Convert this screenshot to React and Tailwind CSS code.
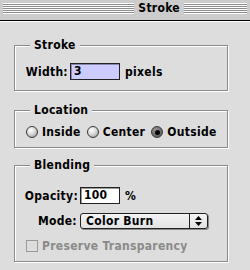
import React from 'react';

const font = { fontFamily: '"DejaVu Sans Condensed", "DejaVu Sans", "Liberation Sans", sans-serif' };

function Group({ title, className = '', children }) {
  return (
    <fieldset
      className={`ml-[14px] w-[214px] border border-[#8a8a8a] shadow-[inset_1px_1px_0_#fff,1px_1px_0_#fff] ${className}`}
    >
      <legend className="ml-[15px] px-[4px] h-[13px] leading-[13px] bg-[#dddddd] text-[12px] font-bold text-black">
        {title}
      </legend>
      {children}
    </fieldset>
  );
}

function Radio({ label, checked }) {
  return (
    <div className="flex items-center gap-[4px]">
      <span
        className={`w-[12px] h-[12px] rounded-full border border-[#3a3a3a] flex items-center justify-center ${
          checked
            ? 'bg-[radial-gradient(circle_at_40%_35%,#9a9a9a,#4a4a4a)]'
            : 'bg-[radial-gradient(circle_at_38%_32%,#ffffff_0%,#d8d8d8_45%,#8c8c8c_100%)]'
        }`}
      >
        {checked && <span className="w-[5px] h-[5px] rounded-full bg-black" />}
      </span>
      <span className="text-[12px] font-bold leading-[14px]">{label}</span>
    </div>
  );
}

function Stripes({ className = '' }) {
  return (
    <div
      className={`h-[11px] bg-[repeating-linear-gradient(to_bottom,#ffffff_0px,#ffffff_1px,#8c8c8c_1px,#8c8c8c_2px)] ${className}`}
    />
  );
}

export default function App() {
  return (
    <div className="w-[250px] h-[270px] bg-[#dddddd] text-black tracking-[0.3px] overflow-hidden" style={font}>
      {/* floating window title bar */}
      <div className="h-[21px] bg-[#cccccc] border-b border-black flex items-center px-[3px] pb-[3px]">
        <Stripes className="flex-1" />
        <span className="px-[4px] text-[12px] font-bold leading-[13px]">Stroke</span>
        <Stripes className="w-[63px]" />
      </div>
      <div className="border-t border-white">
        <Group title="Stroke" className="mt-[17px] pt-[11px] pb-[10px]">
          <div className="flex items-center h-[17px]">
            <span className="w-[53px] text-right text-[12px] font-bold">Width:</span>
            <div className="ml-[2px] w-[50px] h-[17px] bg-[#ccccff] border border-[#222] shadow-[inset_1px_1px_0_#8888aa] px-[3px] text-[12px] font-bold leading-[15px]">
              3
            </div>
            <span className="ml-[5px] text-[12px] font-bold">pixels</span>
          </div>
        </Group>

        <Group title="Location" className="mt-[13px] pt-[8px] pb-[8px]">
          <div className="flex items-center pl-[11px] gap-[6px]">
            <Radio label="Inside" />
            <Radio label="Center" />
            <Radio label="Outside" checked />
          </div>
        </Group>

        <Group title="Blending" className="mt-[11px] pt-[15px] pb-[8px]">
          <div className="flex items-center h-[17px]">
            <span className="w-[63px] text-right text-[12px] font-bold">Opacity:</span>
            <div className="ml-[2px] w-[40px] h-[17px] bg-white border border-[#222] shadow-[inset_1px_1px_0_#999] px-[3px] text-[12px] font-bold leading-[15px]">
              100
            </div>
            <span className="ml-[5px] text-[12px] font-bold">%</span>
          </div>
          <div className="flex items-center mt-[8px] h-[17px]">
            <span className="w-[62px] text-right text-[12px] font-bold">Mode:</span>
            <div className="ml-[3px] w-[128px] h-[16px] flex rounded-[3px] border border-[#222] bg-[linear-gradient(to_bottom,#f4f4f4,#e2e2e2)] shadow-[1px_1px_0_#888]">
              <span className="flex-1 pl-[5px] text-[12px] font-bold leading-[14px]">Color Burn</span>
              <span className="w-[18px] border-l border-[#222] flex items-center justify-center">
                <svg width="7" height="10" viewBox="0 0 7 10">
                  <path d="M3.5 0 L7 4 L0 4 Z" fill="#000" />
                  <path d="M0 6 L7 6 L3.5 10 Z" fill="#000" />
                </svg>
              </span>
            </div>
          </div>
          <div className="flex items-center mt-[10px] pl-[11px] gap-[4px]">
            <span className="w-[12px] h-[12px] border border-[#9a9a9a] bg-[#dddddd]" />
            <span className="text-[12px] font-bold leading-[14px] text-[#8a8a8a]">Preserve Transparency</span>
          </div>
        </Group>
      </div>
    </div>
  );
}
